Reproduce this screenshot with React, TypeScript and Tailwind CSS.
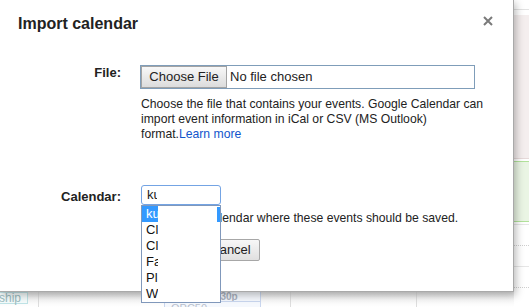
import React from "react";

const CALENDARS: string[] = ["ku", "Cl", "Cl", "Fa", "Pl", "W"];

function CloseIcon(): React.JSX.Element {
  return (
    <svg width="10" height="10" viewBox="0 0 10 10" className="block">
      <path d="M1 1L9 9M9 1L1 9" stroke="#7a7a7a" strokeWidth="2" />
    </svg>
  );
}

// 背景のカレンダー (右端と下端だけ見えている)
function Background(): React.JSX.Element {
  return (
    <div className="flex h-full">
      <div className="flex w-[514px] flex-col">
        <div className="h-[292px]" />
        <div className="flex h-[15px] bg-gradient-to-b from-[#e4e4e4] via-[#f6f6f6] to-white">
          <div className="w-[39px] border-r border-[#dddddd]">
            <div className="flex h-[12px] w-[28px] items-center justify-end border border-l-0 border-[#bfe3e6] bg-[#f4fbfb] pr-[6px] text-[12px] leading-[12px] text-[#9bbcbf]">
              ship
            </div>
          </div>
          <div className="w-[252px] border-r border-[#dddddd]">
            <div className="ml-[125px] flex h-full w-[97px] flex-col border-x border-[#c9d6ee] bg-[#f5f8fd]">
              <div className="h-[9px] pl-[41px] text-[10px] leading-[9px] font-bold text-[#aab2c0]">12:30p</div>
              <div className="border-t border-[#c9d6ee] pl-[6px] text-[11px] leading-[12px] text-[#b8bfcc]">OPC50</div>
            </div>
          </div>
          <div className="w-[126px] border-r border-[#dddddd]" />
          <div className="flex-1" />
        </div>
      </div>
      <div className="flex w-[15px] flex-col">
        <div className="h-[9px]" />
        <div className="h-px bg-[#e2e2e2]" />
        <div className="h-[5px]" />
        <div className="h-[144px] border-b border-[#e6d9d9] bg-[#f4eeee]" />
        <div className="h-[2px]" />
        <div className="h-[61px] border-y border-[#b2e29b] bg-[#eaf5e4]" />
        <div className="h-[2px]" />
        <div className="h-px bg-[#e6e6e6]" />
        <div className="h-[20px]" />
        <div className="border-t border-dotted border-[#cfcfcf]" />
        <div className="h-[20px]" />
        <div className="h-px bg-[#e6e6e6]" />
        <div className="h-[20px]" />
        <div className="border-t border-dotted border-[#cfcfcf]" />
      </div>
    </div>
  );
}

function GrayButton({ label, width }: { label: string; width: string }): React.JSX.Element {
  return (
    <button
      type="button"
      className={`h-[22px] ${width} rounded-[2px] border border-[#a7a7a7] bg-gradient-to-b from-[#f7f7f7] to-[#e0e0e0] text-center text-[13px] leading-[20px] text-[#222]`}
    >
      {label}
    </button>
  );
}

export default function App(): React.JSX.Element {
  return (
    <div className="relative h-[307px] w-[529px] overflow-hidden bg-white font-['Liberation_Sans',Arial,sans-serif] text-[13px] text-[#222]">
      <Background />

      {/* ダイアログ */}
      <div className="absolute top-0 left-0 h-[292px] w-[514px] border-r border-b border-[#a9a9a9] bg-white shadow-[2px_3px_8px_rgba(0,0,0,0.28)]">
        <button type="button" className="absolute top-[16px] right-[20px]">
          <CloseIcon />
        </button>

        <h2 className="pt-[14px] pl-[18px] text-[16px] leading-[20px] font-bold text-[#222]">Import calendar</h2>

        {/* File */}
        <div className="mt-[31px] flex items-start">
          <label className="w-[121px] text-right leading-[16px] font-bold">File:</label>
          <div className="ml-[19px] flex flex-col">
            <div className="flex h-[24px] w-[335px] items-center border border-[#7f9db9]">
              <span className="h-[22px] w-[86px] border border-[#a3a3a3] bg-gradient-to-b from-[#f8f8f8] to-[#dcdcdc] text-center leading-[20px]">
                Choose File
              </span>
              <span className="ml-[3px] leading-[16px]">No file chosen</span>
            </div>
            <p className="mt-[8px] pl-[1px] text-[12.2px] leading-[15px] whitespace-nowrap">
              Choose the file that contains your events. Google Calendar can
              <br />
              import event information in iCal or CSV (MS Outlook)
              <br />
              format.<a className="text-[#1155cc]">Learn more</a>
            </p>
          </div>
        </div>

        {/* Calendar */}
        <div className="mt-[43px] flex items-start">
          <label className="w-[121px] pt-[4px] text-right leading-[16px] font-bold">Calendar:</label>
          <div className="ml-[20px] flex flex-col">
            <div className="relative z-10 flex h-[20px] w-[80px] items-center rounded-[3px] border border-[#74a4e4] pl-[5px]">
              <span className="w-[10px] overflow-hidden leading-[16px] whitespace-nowrap">ku</span>
              <ul className="absolute top-[19px] left-[-1px] h-[98px] w-[80px] border border-[#8098bb] bg-white">
                {CALENDARS.map((name, i) => (
                  <li key={i} className="flex h-[16px] items-start">
                    <span
                      className={`h-[16px] w-[16px] overflow-hidden pl-[4px] leading-[16px] whitespace-nowrap ${
                        i === 0 ? "bg-[#3399ff] text-white" : "text-[#111]"
                      }`}
                    >
                      {name}
                    </span>
                    {i === 0 && <span className="mt-[1px] ml-auto h-[15px] w-[3px] bg-[#3399ff]" />}
                  </li>
                ))}
              </ul>
            </div>
            <p className="mt-[6px] text-[12.2px] leading-[15px] whitespace-nowrap">
              Choose the calendar where these events should be saved.
            </p>
            <div className="mt-[13px] flex gap-[5px]">
              <GrayButton label="Import" width="w-[55px]" />
              <GrayButton label="Cancel" width="w-[59px]" />
            </div>
          </div>
        </div>
      </div>
    </div>
  );
}
